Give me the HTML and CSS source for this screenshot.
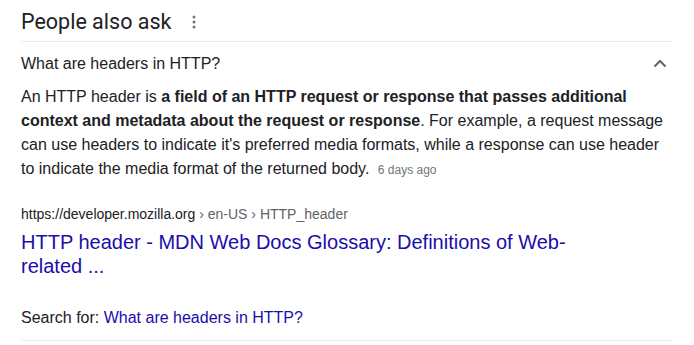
FILE: index.html
```html
<!DOCTYPE html>
<html lang="en">
<head>
<meta charset="UTF-8" />
<meta name="viewport" content="width=device-width, initial-scale=1" />
<title>People also ask</title>
<link rel="stylesheet" href="styles.css">
</head>
<body>

<div class="paa">
  <div class="paa-head">
    <h2>People also ask</h2>
    <svg class="kebab" width="4" height="14" viewBox="0 0 4 14">
      <circle cx="2" cy="2" r="1.5" />
      <circle cx="2" cy="7" r="1.5" />
      <circle cx="2" cy="12" r="1.5" />
    </svg>
  </div>

  <div class="question">
    <span>What are headers in HTTP?</span>
    <svg class="chevron" width="14" height="9" viewBox="0 0 14 9">
      <path d="M1.5 7.5 L7 2 L12.5 7.5" />
    </svg>
  </div>

  <div class="answer">
    <p>An HTTP header is <b>a field of an HTTP request or response that passes additional context and metadata about the request or response</b>. For example, a request message can use headers to indicate it's preferred media formats, while a response can use header to indicate the media format of the returned body. <span class="date">6 days ago</span></p>

    <div class="source">
      <div class="cite">https://developer.mozilla.org <span>› en-US › HTTP_header</span></div>
      <a href="#" class="title">HTTP header - MDN Web Docs Glossary: Definitions of Web-related ...</a>
    </div>

    <div class="search-for">Search for: <a href="#">What are headers in HTTP?</a></div>
  </div>
</div>

</body>
</html>
```

FILE: styles.css
```css
body { margin: 0; background: #fff; font-family: "Liberation Sans", Arial, sans-serif; color: #202124; }
.paa { width: 652px; margin-left: 21px; }

.paa-head { display: flex; align-items: center; gap: 21px; height: 42px; border-bottom: 1px solid #ebebeb; box-sizing: border-box; }
.paa-head h2 { margin: 0; font-family: Roboto, "Liberation Sans", sans-serif; font-weight: 400; font-size: 21.5px; line-height: 28px; color: #202124; padding-top: 2px; }
.kebab { fill: #70757a; margin-top: 2px; }

.question { display: flex; justify-content: space-between; align-items: center; height: 43px; font-size: 16px; }
.chevron { fill: none; stroke: #5f6368; stroke-width: 2; margin-right: 6px; }

.answer p { margin: 0; font-size: 16px; line-height: 24px; }
.date { font-size: 12px; color: #70757a; margin-left: 4px; }

.source { margin-top: 22px; }
.cite { font-size: 14px; line-height: 20px; color: #202124; }
.cite span { color: #5f6368; }
.title { display: block; max-width: 600px; margin-top: 6px; font-size: 20px; line-height: 24px; color: #1a0dab; text-decoration: none; }

.search-for { margin-top: 29px; padding-bottom: 11px; font-size: 16px; line-height: 22px; border-bottom: 1px solid #ebebeb; }
.search-for a { color: #1a0dab; text-decoration: none; }
```
